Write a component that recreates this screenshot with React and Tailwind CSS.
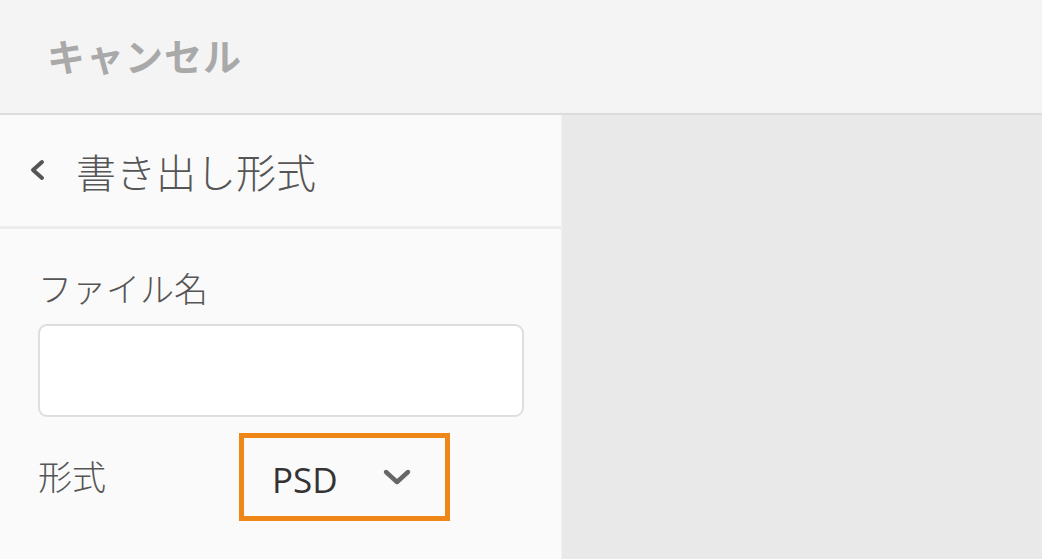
import React from 'react';

export default function App() {
  return (
    <div
      className="w-[1042px] h-[559px] overflow-hidden flex flex-col bg-[#e9e9e9]"
      style={{ fontFamily: '"Noto Sans CJK JP", "Noto Sans", sans-serif' }}
    >
      {/* Top bar */}
      <div className="h-[115px] shrink-0 bg-[#f4f4f4] border-b-2 border-[#dcdcdc] flex items-center pl-[47px]">
        <span className="text-[38px] font-bold text-[#a9a9a9] tracking-[1px] leading-none -mt-[3px]">キャンセル</span>
      </div>

      <div className="flex flex-1 min-h-0">
        {/* Left panel */}
        <div className="w-[562px] shrink-0 bg-[#fafafa] border-r border-[#f2f2f2] flex flex-col">
          <div className="h-[114px] shrink-0 flex items-center border-b-[3px] border-[#ececec] pl-[27px]">
            <svg width="22" height="26" viewBox="0 0 22 26" className="text-[#555] -mt-[2px]">
              <path d="M15 5 L6 13 L15 21" fill="none" stroke="currentColor" strokeWidth="4" strokeLinecap="round" strokeLinejoin="round" />
            </svg>
            <span className="ml-[27px] text-[40px] font-light text-[#555] leading-none">書き出し形式</span>
          </div>

          <div className="px-[38px] pt-[42px]">
            <div className="text-[34px] font-light text-[#555] leading-none">ファイル名</div>
            <div className="mt-[19px] w-[486px] h-[93px] bg-white border-2 border-[#dedede] rounded-[9px]" />
            <div className="mt-[16px] flex items-center">
              <span className="w-[201px] text-[34px] font-light text-[#555] leading-none -mt-[2px]">形式</span>
              <div className="w-[211px] h-[88px] border-[5px] border-[#ef8618] flex items-center pl-[28px]">
                <span className="text-[35px] text-[#333] leading-none mt-[4px]" style={{ fontFamily: '"Open Sans", "Noto Sans", sans-serif' }}>PSD</span>
                <svg width="30" height="20" viewBox="0 0 30 20" className="ml-[44px] text-[#666]">
                  <path d="M4 5 L15 15 L26 5" fill="none" stroke="currentColor" strokeWidth="4.4" strokeLinecap="round" strokeLinejoin="round" />
                </svg>
              </div>
            </div>
          </div>
        </div>

        {/* Right area */}
        <div className="flex-1 bg-[#e9e9e9]" />
      </div>
    </div>
  );
}
